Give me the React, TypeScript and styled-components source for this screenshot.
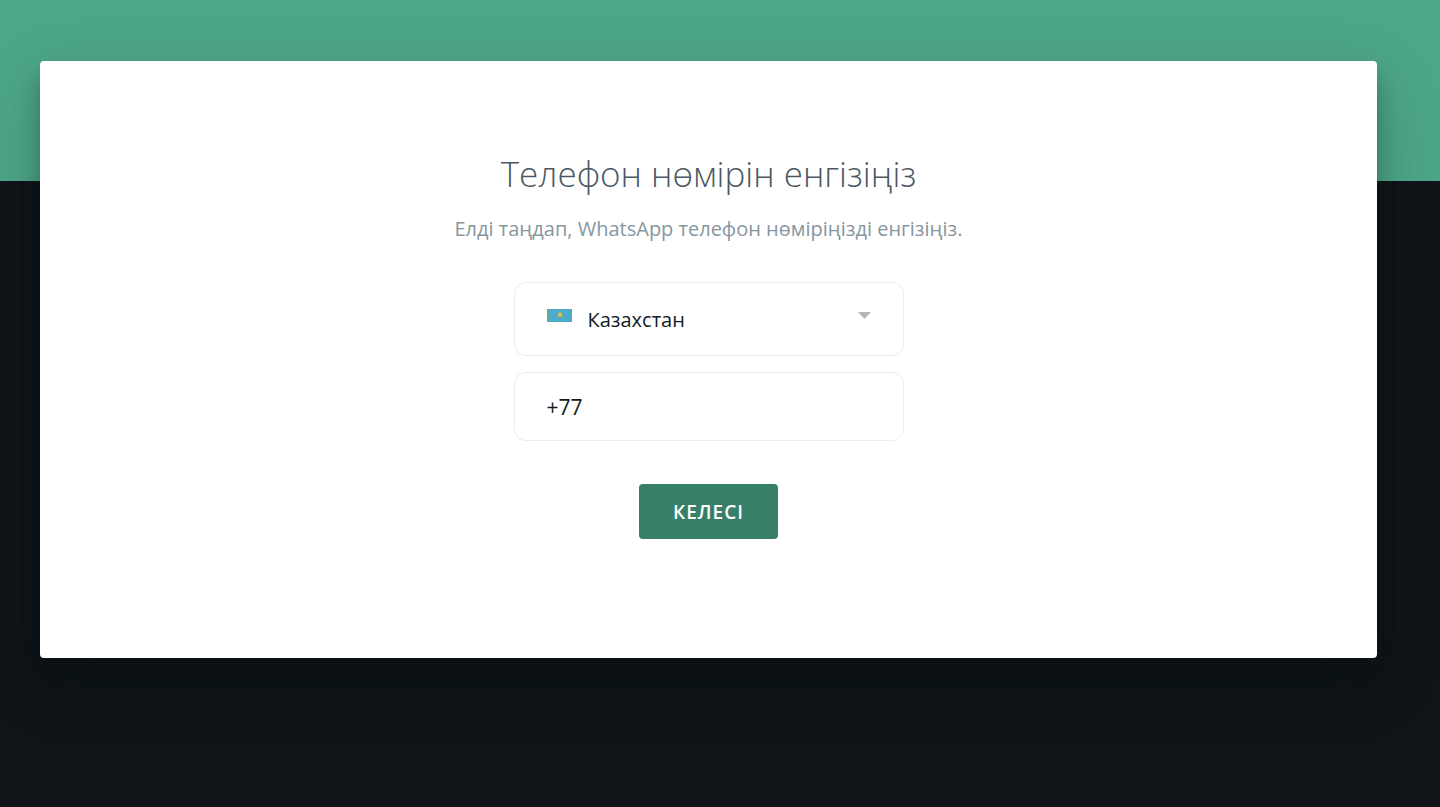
import React, { useState } from "react";
import styled, { createGlobalStyle } from "styled-components";

const GlobalStyle = createGlobalStyle`
  *, *::before, *::after { box-sizing: border-box; }
  body {
    margin: 0;
    background: #0e1418;
    font-family: "Open Sans", "Noto Sans", sans-serif;
    color: #111b21;
  }
`;

const Page = styled.div`
  min-height: 100vh;
  padding: 61px 63px 61px 40px;
  background: linear-gradient(#4da688 0 181px, #0e1418 181px);
`;

const Card = styled.main`
  display: flex;
  flex-direction: column;
  align-items: center;
  padding: 87px 40px 119px;
  background: #ffffff;
  border-radius: 4px;
  box-shadow: 0 23px 68px rgba(9, 14, 17, 0.19), 0 16px 20px rgba(9, 14, 17, 0.24);
`;

const Title = styled.h1`
  margin: 0;
  font-size: 35px;
  line-height: 52px;
  font-weight: 300;
  color: #4b5864;
`;

const Subtitle = styled.p`
  margin: 13px 0 0;
  font-size: 20px;
  line-height: 32px;
  color: #8696a0;
`;

const Form = styled.form`
  display: flex;
  flex-direction: column;
  align-items: center;
  gap: 16px;
  width: 100%;
  max-width: 390px;
  margin-top: 37px;
`;

const Field = styled.div<{ $height: number }>`
  display: flex;
  align-items: center;
  gap: 16px;
  width: 100%;
  height: ${(p) => p.$height}px;
  padding: 0 32px;
  border: 1px solid #e9edef;
  border-radius: 12px;
`;

const Flag = styled.svg`
  flex: none;
  width: 25px;
  height: 13px;
  margin-bottom: 8px;
`;

const Arrow = styled.svg`
  flex: none;
  width: 13px;
  height: 7px;
  margin-bottom: 8px;
`;

const Country = styled.select`
  flex: 1;
  min-width: 0;
  height: 40px;
  padding: 0;
  border: 0;
  outline: 0;
  appearance: none;
  background: transparent;
  font: inherit;
  font-size: 20px;
  color: inherit;
`;

const Phone = styled.input`
  flex: 1;
  min-width: 0;
  height: 40px;
  padding: 0;
  border: 0;
  outline: 0;
  background: transparent;
  font: inherit;
  font-size: 21px;
  color: inherit;
`;

const NextButton = styled.button`
  height: 55px;
  margin-top: 27px;
  padding: 0 34px;
  border: 0;
  border-radius: 4px;
  background: #387f6a;
  color: #ffffff;
  font: inherit;
  font-size: 19px;
  font-weight: 600;
  letter-spacing: 1px;
  text-transform: uppercase;
  cursor: pointer;
`;

export default function App() {
  const [phone, setPhone] = useState("+77");
  return (
    <>
      <GlobalStyle />
      <Page>
        <Card>
          <Title>Телефон нөмірін енгізіңіз</Title>
          <Subtitle>Елді таңдап, WhatsApp телефон нөміріңізді енгізіңіз.</Subtitle>
          <Form onSubmit={(e) => e.preventDefault()}>
            <Field $height={74}>
              <Flag viewBox="0 0 25 13" aria-hidden="true">
                <rect width="25" height="13" fill="#4cabc9" />
                <path d="M1.5 1v11" stroke="#5fae9a" strokeWidth="1" />
                <path d="M10 6.500q1 1.800 3 1.200q2 .6 3-1.200" fill="none" stroke="#a3b65c" strokeWidth="1" />
                <circle cx="13" cy="5.500" r="1.900" fill="#f0c52e" />
              </Flag>
              <Country aria-label="Ел" defaultValue="kz">
                <option value="kz">Казахстан</option>
              </Country>
              <Arrow viewBox="0 0 13 7" aria-hidden="true">
                <path d="M0 0h13L6.500 7z" fill="#b3b5b6" />
              </Arrow>
            </Field>
            <Field $height={69}>
              <Phone
                type="tel"
                aria-label="Телефон нөмірі"
                value={phone}
                onChange={(e) => setPhone(e.target.value)}
              />
            </Field>
            <NextButton type="submit">Келесі</NextButton>
          </Form>
        </Card>
      </Page>
    </>
  );
}
